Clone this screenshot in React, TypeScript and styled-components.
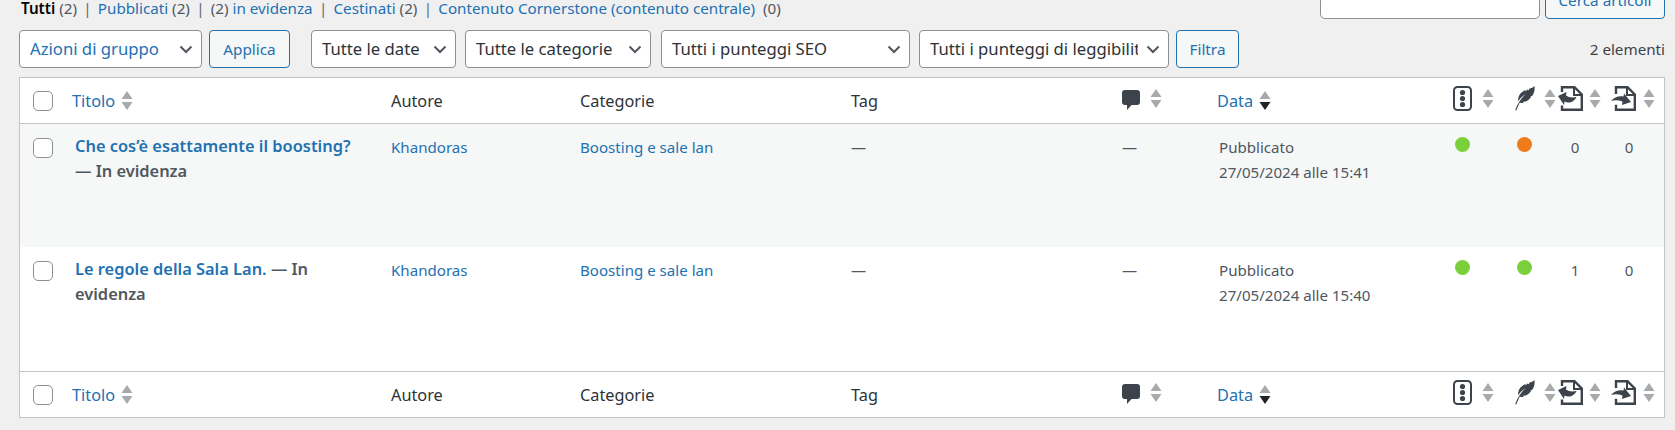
import styled, { createGlobalStyle } from "styled-components";

const GlobalStyle = createGlobalStyle`
  html, body {
    margin: 0;
    padding: 0;
    background: #f0f0f1;
    overflow: hidden;
  }
  body {
    font-family: "Noto Sans", "Open Sans", sans-serif;
    font-size: 16px;
    color: #2c3338;
  }
`;

const Page = styled.div`
  height: 430px;
  padding: 0 10px 0 19px;
  box-sizing: border-box;
`;

const TopRow = styled.div`
  display: flex;
  justify-content: space-between;
  align-items: flex-end;
  height: 19px;
`;

const ViewList = styled.ul`
  display: flex;
  margin: 0 0 2px 2px;
  padding: 0;
  list-style: none;
  font-size: 15.2px;
  line-height: 18px;
  color: #50575e;
`;

const ViewItem = styled.li`
  white-space: pre;
`;

const Sep = styled.span`
  color: #646970;
  margin: 0 6.25px;
`;

const ViewLink = styled.a<{ $current?: boolean }>`
  color: ${(p) => (p.$current ? "#000" : "#2271b1")};
  font-weight: ${(p) => (p.$current ? 600 : 400)};
  text-decoration: none;
`;

const SearchBox = styled.div`
  display: flex;
  gap: 5px;
`;

const SearchInput = styled.input`
  width: 220px;
  height: 38px;
  box-sizing: border-box;
  border: 1px solid #8c8f94;
  border-radius: 5px;
  background: #fff;
`;

const Button = styled.button`
  width: 120px;
  height: 38px;
  box-sizing: border-box;
  padding: 0;
  border: 1px solid #2271b1;
  border-radius: 4px;
  background: #f6f7f7;
  color: #2271b1;
  font-family: inherit;
  font-size: 15.3px;
  white-space: nowrap;
`;

const Toolbar = styled.div`
  display: flex;
  align-items: center;
  margin-top: 11px;
  height: 38px;
`;

const arrow = `url("data:image/svg+xml,%3Csvg xmlns='http://www.w3.org/2000/svg' width='14' height='9' viewBox='0 0 14 9'%3E%3Cpath d='M1.500 1.500 7 7l5.500-5.500' fill='none' stroke='%2350575e' stroke-width='2'/%3E%3C/svg%3E")`;

const Select = styled.select<{ $w: number; $gap: number; $blue?: boolean }>`
  appearance: none;
  width: ${(p) => p.$w}px;
  height: 38px;
  box-sizing: border-box;
  margin-left: ${(p) => p.$gap}px;
  padding: 0 30px 2px 10px;
  border: 1px solid #8c8f94;
  border-radius: 4px;
  background: #fff ${arrow} no-repeat right 8px center;
  color: ${(p) => (p.$blue ? "#2271b1" : "#2c3338")};
  font-family: inherit;
  font-size: 16.7px;
`;

const ToolButton = styled(Button)<{ $gap: number; $w: number }>`
  width: ${(p) => p.$w}px;
  margin-left: ${(p) => p.$gap}px;
`;

const Count = styled.div`
  margin-left: auto;
  font-size: 15.2px;
  color: #3c434a;
`;

const Table = styled.table`
  width: 1646px;
  margin-top: 9px;
  table-layout: fixed;
  border-collapse: separate;
  border-spacing: 0;
  background: #fff;
  border: 1px solid #c3c4c7;
  box-sizing: border-box;
`;

const HeadCell = styled.th<{ $foot?: boolean }>`
  height: 46px;
  padding: 0 0 0 10px;
  box-sizing: border-box;
  text-align: left;
  font-weight: 400;
  font-size: 16.3px;
  color: #2c3338;
  border-${(p) => (p.$foot ? "top" : "bottom")}: 1px solid #c3c4c7;
  white-space: nowrap;
`;

const SortWrap = styled.span<{ $gap?: number }>`
  display: inline-flex;
  align-items: center;
  gap: ${(p) => p.$gap ?? 6}px;
`;

const SortLabel = styled.a`
  color: #2271b1;
  text-decoration: none;
`;

const Row = styled.tr<{ $alt?: boolean }>`
  background: ${(p) => (p.$alt ? "#f6f7f7" : "#fff")};
  height: ${(p) => (p.$alt ? 123 : 124)}px;
`;

const Cell = styled.td<{ $pl?: number }>`
  padding: 11px 10px 0 ${(p) => p.$pl ?? 10}px;
  vertical-align: top;
  font-size: 15.1px;
  line-height: 24.5px;
  color: #50575e;
`;

const CheckCell = styled(Cell)`
  padding: 14px 0 0 13px;
`;

const Check = styled.input.attrs({ type: "checkbox" })`
  appearance: none;
  display: block;
  width: 20px;
  height: 20px;
  margin: 0;
  border: 1px solid #8c8f94;
  border-radius: 5px;
  background: #fff;
`;

const HeadCheck = styled(Check)`
  margin-left: 3px;
`;

const Title = styled.strong`
  display: block;
  max-width: 288px;
  margin: -1px 0 0 3px;
  font-size: 16.4px;
  line-height: 24.5px;
  font-weight: 600;
  color: #50575e;
`;

const TitleLink = styled.a`
  color: #2271b1;
  text-decoration: none;
`;

const CellLink = styled.a`
  color: #2271b1;
  text-decoration: none;
`;

const Dot = styled.div<{ $color: string }>`
  width: 15px;
  height: 15px;
  margin: 2px 0 0 2px;
  border-radius: 50%;
  background: ${(p) => p.$color};
`;

const Num = styled.div<{ $ml: number }>`
  margin-left: ${(p) => p.$ml}px;
  width: 12px;
  text-align: center;
`;

const Col = styled.col<{ $w: number }>`
  width: ${(p) => p.$w}px;
`;

const COLS = [42, 319, 189, 271, 271, 95, 236, 62, 43, 53, 63];

function SortArrows({ down }: { down?: boolean }) {
  return (
    <svg width="12" height="21" viewBox="0 0 12 21">
      <path d="M6 1l5.500 8H.5z" fill="#a7aaad" />
      <path d="M.5 12h11L6 20z" fill={down ? "#1d2327" : "#a7aaad"} />
    </svg>
  );
}

function CommentIcon() {
  return (
    <svg width="18" height="26" viewBox="0 -5 18 26">
      <path
        d="M3 0h12a3 3 0 0 1 3 3v9a3 3 0 0 1-3 3H9.500L5 20v-5H3a3 3 0 0 1-3-3V3a3 3 0 0 1 3-3z"
        fill="#3c434a"
      />
    </svg>
  );
}

function TrafficIcon() {
  return (
    <svg width="19" height="25" viewBox="0 0 19 25">
      <rect x="1" y="1" width="17" height="23" rx="3.500" fill="none" stroke="#3c434a" stroke-width="2" />
      <circle cx="9.500" cy="6.500" r="2.600" fill="#3c434a" />
      <circle cx="9.500" cy="12.500" r="2.600" fill="#3c434a" />
      <circle cx="9.500" cy="18.500" r="2.600" fill="#3c434a" />
    </svg>
  );
}

function FeatherIcon() {
  return (
    <svg width="20" height="25" viewBox="0 0 20 25">
      <path
        d="M19.500 0C20 4 19 8 17 10l-2 .2 1.200.6C14.500 13.500 12.500 15 10 15.800l-2-.2.8.8C7.500 17 6 17 4.600 16.800L1.200 24.500l-1-.5C2.500 18 6 12 11 7.500 7.500 10 5 12.500 3.200 15.300 2.600 10 6 5.500 10.500 4.200L11 5.500l1-2 1.800.8.700-1.800C16.500 2.500 18 1.500 19.500 0z"
        fill="#3c434a"
      />
    </svg>
  );
}

function LinkInIcon() {
  return (
    <svg width="25" height="25" viewBox="0 0 25 25">
      <path d="M4 6V1.200h12.500l7.300 7.300v15.300H4v-4.300" fill="none" stroke="#3c434a" stroke-width="2.400" />
      <path d="M16 1.200v7.800h7.800" fill="none" stroke="#3c434a" stroke-width="2" />
      <path d="M0 10l8.500-4-.5 3.500c2.500 1.800 6 2.500 10.500 1.500-2 4.800-7.500 7-12 4.500L6 19z" fill="#3c434a" />
    </svg>
  );
}

function LinkOutIcon() {
  return (
    <svg width="25" height="25" viewBox="0 0 25 25">
      <path d="M5 8V1.200h11.500l7.300 7.300v15.300H5v-5" fill="none" stroke="#3c434a" stroke-width="2.400" />
      <path d="M16 1.200v7.800h7.800" fill="none" stroke="#3c434a" stroke-width="2" />
      <path d="M0 15c3-3.500 7.500-5.500 12.500-4.500L13 7.500l7 8.500-9 3 .5-3.500c-4-1.500-8-1.500-11.500-.5z" fill="#3c434a" />
    </svg>
  );
}

function HeaderCells({ foot }: { foot?: boolean }) {
  return (
    <tr>
      <HeadCell $foot={foot}>
        <HeadCheck />
      </HeadCell>
      <HeadCell $foot={foot}>
        <SortWrap>
          <SortLabel>Titolo</SortLabel>
          <SortArrows />
        </SortWrap>
      </HeadCell>
      <HeadCell $foot={foot}>Autore</HeadCell>
      <HeadCell $foot={foot}>Categorie</HeadCell>
      <HeadCell $foot={foot}>Tag</HeadCell>
      <HeadCell $foot={foot}>
        <SortWrap $gap={10}>
          <CommentIcon />
          <SortArrows />
        </SortWrap>
      </HeadCell>
      <HeadCell $foot={foot}>
        <SortWrap>
          <SortLabel>Data</SortLabel>
          <SortArrows down />
        </SortWrap>
      </HeadCell>
      <HeadCell $foot={foot}>
        <SortWrap $gap={10}>
          <TrafficIcon />
          <SortArrows />
        </SortWrap>
      </HeadCell>
      <HeadCell $foot={foot}>
        <SortWrap $gap={9}>
          <FeatherIcon />
          <SortArrows />
        </SortWrap>
      </HeadCell>
      <HeadCell $foot={foot}>
        <SortWrap>
          <LinkInIcon />
          <SortArrows />
        </SortWrap>
      </HeadCell>
      <HeadCell $foot={foot}>
        <SortWrap $gap={7}>
          <LinkOutIcon />
          <SortArrows />
        </SortWrap>
      </HeadCell>
    </tr>
  );
}

const posts = [
  { title: "Che cos’è esattamente il boosting?", time: "27/05/2024 alle 15:41", read: "#ee7c1b", links: 0 },
  { title: "Le regole della Sala Lan.", time: "27/05/2024 alle 15:40", read: "#7ad03a", links: 1 },
];

export default function App() {
  return (
    <Page>
      <GlobalStyle />
      <TopRow>
        <ViewList>
          <ViewItem><ViewLink $current>Tutti</ViewLink> (2)<Sep>|</Sep></ViewItem>
          <ViewItem><ViewLink>Pubblicati</ViewLink> (2)<Sep>|</Sep></ViewItem>
          <ViewItem>(2) <ViewLink>in evidenza</ViewLink><Sep>|</Sep></ViewItem>
          <ViewItem><ViewLink>Cestinati</ViewLink> (2)<Sep>|</Sep></ViewItem>
          <ViewItem><ViewLink>Contenuto Cornerstone (contenuto centrale)</ViewLink>  (0)</ViewItem>
        </ViewList>
        <SearchBox>
          <SearchInput />
          <Button>Cerca articoli</Button>
        </SearchBox>
      </TopRow>
      <Toolbar>
        <Select $w={183} $gap={0} $blue><option>Azioni di gruppo</option></Select>
        <ToolButton $w={81} $gap={7}>Applica</ToolButton>
        <Select $w={145} $gap={21}><option>Tutte le date</option></Select>
        <Select $w={186} $gap={9}><option>Tutte le categorie</option></Select>
        <Select $w={249} $gap={10}><option>Tutti i punteggi SEO</option></Select>
        <Select $w={250} $gap={9}><option>Tutti i punteggi di leggibilità</option></Select>
        <ToolButton $w={63} $gap={7}>Filtra</ToolButton>
        <Count>2 elementi</Count>
      </Toolbar>
      <Table>
        <colgroup>
          {COLS.map((w, i) => (
            <Col key={i} $w={w} />
          ))}
        </colgroup>
        <thead>
          <HeaderCells />
        </thead>
        <tbody>
          {posts.map((post, i) => (
            <Row key={post.title} $alt={i === 0}>
              <CheckCell><Check /></CheckCell>
              <Cell>
                <Title>
                  <TitleLink>{post.title}</TitleLink> — In evidenza
                </Title>
              </Cell>
              <Cell><CellLink>Khandoras</CellLink></Cell>
              <Cell><CellLink>Boosting e sale lan</CellLink></Cell>
              <Cell>—</Cell>
              <Cell>—</Cell>
              <Cell $pl={12}>
                Pubblicato
                <br />
                {post.time}
              </Cell>
              <Cell><Dot $color="#7ad03a" /></Cell>
              <Cell><Dot $color={post.read} /></Cell>
              <Cell><Num $ml={11}>{post.links}</Num></Cell>
              <Cell><Num $ml={12}>0</Num></Cell>
            </Row>
          ))}
        </tbody>
        <tfoot>
          <HeaderCells foot />
        </tfoot>
      </Table>
    </Page>
  );
}
